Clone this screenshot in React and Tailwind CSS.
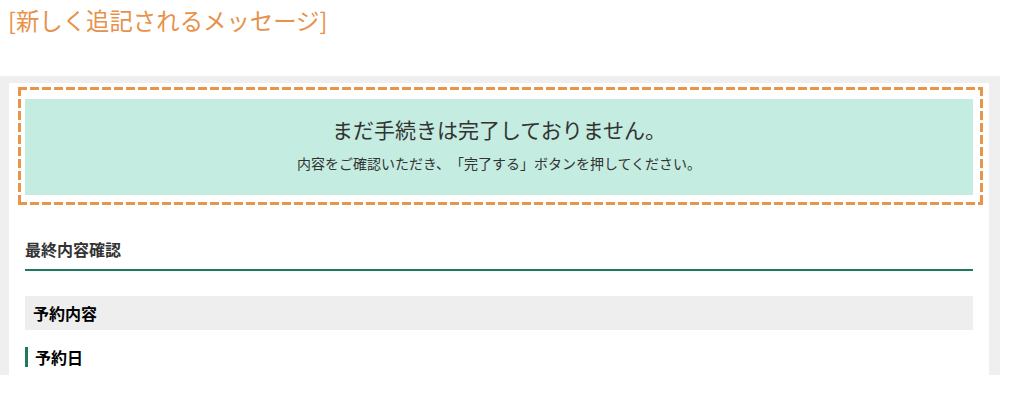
export default function App() {
  return (
    <div className="min-h-screen bg-white font-['Noto_Sans_CJK_JP','Noto_Sans',sans-serif] [text-spacing-trim:space-all]">
      <h1 className="pl-2 pt-2 text-[23.4px] leading-[24px] font-normal text-[#e8914a]">
        [新しく追記されるメッセージ]
      </h1>

      <div className="mt-[44px] h-[299px] w-[1000px] overflow-hidden bg-[#efefef] pt-[7px] pl-[9px] pr-[11px]">
        <div className="h-full bg-white pt-[4px]">
          {/* 追記メッセージの点線枠 */}
          <div className="ml-[9px] mr-[6px] bg-no-repeat pt-[12px] pb-[10px] pl-[7px] pr-[10px] [background-image:repeating-linear-gradient(90deg,#e8954a_0_9px,transparent_9px_12px),repeating-linear-gradient(90deg,#e8954a_0_9px,transparent_9px_12px),repeating-linear-gradient(180deg,#e8954a_0_9px,transparent_9px_12px),repeating-linear-gradient(180deg,#e8954a_0_9px,transparent_9px_12px)] [background-position:left_top,left_bottom,left_top,right_top] [background-size:100%_3px,100%_3px,3px_100%,3px_100%]">
            <div className="bg-[#c4ece0] pt-[16px] pb-[22px] text-center text-[#333]">
              <p className="text-[21px] leading-[29px]">まだ手続きは完了しておりません。</p>
              <p className="mt-[9px] text-[14px] leading-[20px]">
                内容をご確認いただき、「完了する」ボタンを押してください。
              </p>
            </div>
          </div>

          <div className="px-4">
            <h2 className="mt-[32px] border-b-2 border-[#1e7a5c] pb-[8px] text-[16px] leading-[24px] font-bold text-[#333]">
              最終内容確認
            </h2>
            <div className="mt-[25px] flex h-[34px] items-center bg-[#eeeeee] pl-2">
              <h3 className="text-[16px] font-bold text-black">予約内容</h3>
            </div>
            <h4 className="mt-[17px] border-l-[3px] border-[#1e7a5c] pl-[7px] text-[16px] leading-[20px] font-bold text-black">
              予約日
            </h4>
          </div>
        </div>
      </div>
    </div>
  );
}
